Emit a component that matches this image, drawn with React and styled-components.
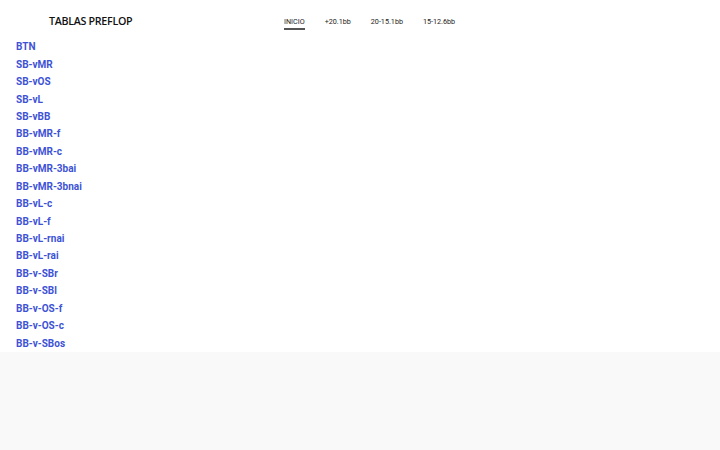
import React from "react";
import styled, { createGlobalStyle } from "styled-components";

const Global = createGlobalStyle`
  html, body { margin: 0; padding: 0; background: #f9f9f9; }
  body { font-family: Roboto, "Noto Sans", sans-serif; }
`;

const Page = styled.div`
  background: #ffffff;
`;

const Header = styled.header`
  height: 38px;
  display: flex;
  align-items: center;
  padding-top: 4px;
  box-sizing: border-box;
`;

const Title = styled.div`
  font-family: "Open Sans", sans-serif;
  font-weight: 600;
  font-size: 10.7px;
  letter-spacing: -0.3px;
  color: #111;
  margin-left: 49px;
  width: 235px;
`;

const Nav = styled.nav`
  display: flex;
  gap: 20px;
  align-items: center;
`;

const NavItem = styled.a`
  font-size: 7.2px;
  color: #222;
  text-decoration: none;
  padding: 3px 0 2px;
  border-bottom: 2px solid ${(p) => (p.$active ? "#555" : "transparent")};
  margin-top: 2px;
`;

const List = styled.ul`
  list-style: none;
  margin: 0;
  padding: 0 0 0 16px;
`;

const Item = styled.li`
  height: 17.45px;
  display: flex;
  align-items: center;
`;

const Link = styled.a`
  font-size: 10px;
  font-weight: 700;
  color: #3d52d6;
  text-decoration: none;
`;

const items = [
  "BTN", "SB-vMR", "SB-vOS", "SB-vL", "SB-vBB", "BB-vMR-f", "BB-vMR-c",
  "BB-vMR-3bai", "BB-vMR-3bnai", "BB-vL-c", "BB-vL-f", "BB-vL-rnai",
  "BB-vL-rai", "BB-v-SBr", "BB-v-SBl", "BB-v-OS-f", "BB-v-OS-c", "BB-v-SBos",
];

export default function App() {
  return (
    <>
      <Global />
      <Page>
        <Header>
          <Title>TABLAS PREFLOP</Title>
          <Nav>
            <NavItem $active>INICIO</NavItem>
            <NavItem>+20.1bb</NavItem>
            <NavItem>20-15.1bb</NavItem>
            <NavItem>15-12.6bb</NavItem>
          </Nav>
        </Header>
        <List>
          {items.map((t) => (
            <Item key={t}>
              <Link href="#">{t}</Link>
            </Item>
          ))}
        </List>
      </Page>
    </>
  );
}
